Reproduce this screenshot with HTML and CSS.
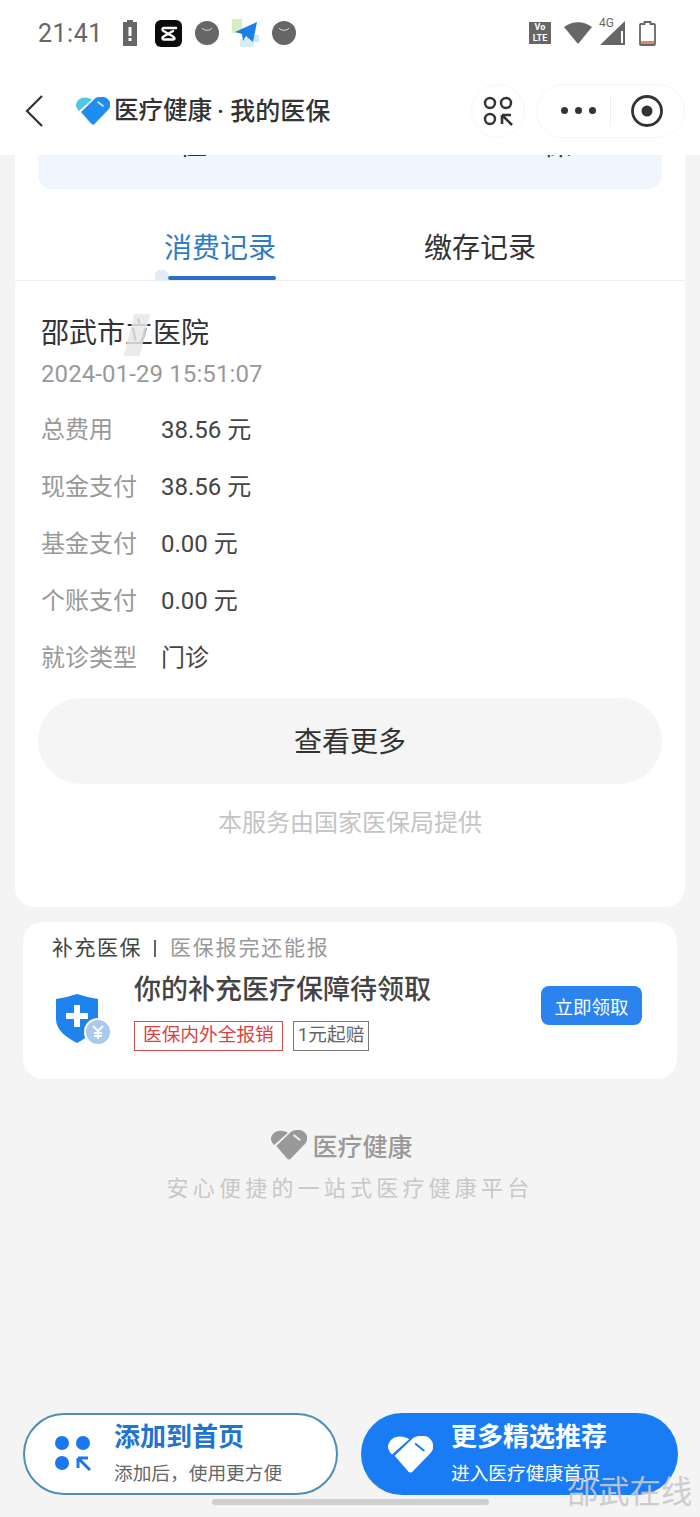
FILE: index.html
```html
<!DOCTYPE html>
<html lang="zh-CN">
    <head>
        <meta charset="utf-8" />
        <meta name="viewport" content="width=device-width, initial-scale=1" />
        <title>我的医保</title>
        <link rel="stylesheet" href="styles.css">
    </head>
    <body>
        <header class="top">
            <div class="status">
                <span class="clock">21:41</span>
                <div class="status-left">
                    <svg class="ic-alert" viewBox="0 0 14 26"><path d="M4 0h6v2h4v24H0V2h4z" fill="#666"/><path d="M5.500 7h3v9h-3zM5.500 18h3v3h-3z" fill="#fff"/></svg>
                    <svg class="ic-cut" viewBox="0 0 27 27"><rect width="27" height="27" rx="6" fill="#0b0b0b"/><path d="M21 8H9C7 8 7 10 8.500 11L18 16.500C20 18 20 19.500 18 19.500H9C7 19.500 7 17.500 8.500 16.500L18 11" stroke="#fff" stroke-width="2.400" fill="none" stroke-linecap="round" stroke-linejoin="round"/></svg>
                    <svg class="ic-round" viewBox="0 0 24 24"><circle cx="12" cy="12" r="12" fill="#666"/><path d="M7 7c2 3 8 3 10 0" stroke="#ddd" stroke-width="1" fill="none"/></svg>
                    <svg class="ic-plane" viewBox="0 0 27 28"><rect width="10" height="14" fill="#d5efc4"/><rect x="15" y="16" width="12" height="7" fill="#c8e6f5"/><rect x="8" y="20" width="14" height="8" fill="#d8ecf5"/><path d="M3 13L25 3l-4 20-7-6-3 5-1-7z" fill="#1a7fe6"/></svg>
                    <svg class="ic-round" viewBox="0 0 24 24"><circle cx="12" cy="12" r="12" fill="#666"/><path d="M7 7c2 3 8 3 10 0" stroke="#ddd" stroke-width="1" fill="none"/></svg>
                </div>
                <div class="status-right">
                    <span class="volte">Vo<br>LTE</span>
                    <svg class="ic-wifi" viewBox="0 0 28 22"><path d="M0 5c8-6.500 20-6.500 28 0L14 22z" fill="#666"/></svg>
                    <div class="signal">
                        <span class="signal-tag">4G</span>
                        <svg class="ic-signal" viewBox="0 0 25 24"><path d="M25 0v24H0z" fill="#666"/><path d="M21 10h2v12h-2z" fill="#fff"/></svg>
                    </div>
                    <svg class="ic-batt" viewBox="0 0 17 25"><path d="M5.500 1h6v2h3.500a1 1 0 0 1 1 1v19a1 1 0 0 1-1 1H2a1 1 0 0 1-1-1V4a1 1 0 0 1 1-1h3.500z" fill="#fff" stroke="#666" stroke-width="1.800"/><path d="M2 20h13v3H2z" fill="#e0876c"/></svg>
                </div>
            </div>
            <nav class="bar">
                <svg class="back" viewBox="0 0 20 34"><path d="M18 2L3 17l15 15" fill="none" stroke="#333" stroke-width="2.200"/></svg>
                <svg class="heart" viewBox="0 0 34 28">
                    <path d="M1 5C3 0 11-1 16 2.500L3 14C0 11-1 8 1 5z" fill="#4cc9e6"/>
                    <path d="M5 15L19 1.500C23-1 30-1 32.500 3 35 6 35 10 32 13L19 26.500C18 28 16 28 15 26.500z" fill="#1f8cf0"/>
                    <path d="M22 5l5 4" stroke="#bfe0fb" stroke-width="2" stroke-linecap="round"/>
                </svg>
                <span class="brand">医疗健康</span>
                <span class="brand-sub">· 我的医保</span>
                <div class="nav-tools">
                    <button class="nav-round">
                        <svg class="ic-add" viewBox="0 0 30 30"><circle cx="7" cy="7" r="5" fill="none" stroke="#333" stroke-width="2.400"/><circle cx="23" cy="7" r="5" fill="none" stroke="#333" stroke-width="2.400"/><circle cx="7" cy="23" r="5" fill="none" stroke="#333" stroke-width="2.400"/><path d="M19 19h9M19 19v9M19 19l10 10" fill="none" stroke="#333" stroke-width="2.600"/></svg>
                    </button>
                    <div class="capsule">
                        <div class="dots"><i></i><i></i><i></i></div>
                        <span class="capsule-line"></span>
                        <svg class="ic-target" viewBox="0 0 32 32"><circle cx="16" cy="16" r="14.500" fill="none" stroke="#333" stroke-width="2.800"/><circle cx="16" cy="16" r="5.500" fill="#333"/></svg>
                    </div>
                </div>
            </nav>
        </header>

        <main class="card">
            <div class="summary"><span>住</span><span>保</span></div>
            <div class="tabs">
                <div class="tab tab-on"><span class="tab-mark"></span>消费记录</div>
                <div class="tab">缴存记录</div>
            </div>
            <section class="record">
                <h2 class="hosp">邵武市<span class="smudged">立</span>医院</h2>
                <p class="date">2024-01-29 15:51:07</p>
                <dl class="rows">
                    <div class="row"><dt>总费用</dt><dd>38.56 元</dd></div>
                    <div class="row"><dt>现金支付</dt><dd>38.56 元</dd></div>
                    <div class="row"><dt>基金支付</dt><dd>0.00 元</dd></div>
                    <div class="row"><dt>个账支付</dt><dd>0.00 元</dd></div>
                    <div class="row"><dt>就诊类型</dt><dd>门诊</dd></div>
                </dl>
                <button class="more">查看更多</button>
                <p class="provider">本服务由国家医保局提供</p>
            </section>
        </main>

        <section class="promo">
            <div class="promo-head"><b>补充医保</b><span class="promo-sep"></span><span class="promo-note">医保报完还能报</span></div>
            <div class="promo-body">
                <svg class="shield" viewBox="0 0 56 52">
                    <path d="M1 6c8-1 14-3 21-5 7 2 14 4 21 5v20c0 11-10 18-21 24C11 44 1 37 1 26z" fill="#1f83ee"/>
                    <path d="M19 12h6v8h8v6h-8v8h-6v-8h-8v-6h8z" fill="#fff"/>
                    <circle cx="43" cy="39" r="14" fill="#fff"/>
                    <circle cx="43" cy="39" r="12" fill="#a9c9ef"/>
                    <path d="M38 33l5 5 5-5M43 38v8M39 40h8M39 43h8" stroke="#fff" stroke-width="2" fill="none"/>
                </svg>
                <div class="promo-text">
                    <h3>你的补充医疗保障待领取</h3>
                    <div class="tags"><span class="tag tag-red">医保内外全报销</span><span class="tag">1元起赔</span></div>
                </div>
                <button class="claim">立即领取</button>
            </div>
        </section>

        <section class="foot">
            <div class="foot-logo">
                <svg class="foot-heart" viewBox="0 0 34 28">
                    <path d="M1 5C3 0 11-1 16 2.500L3 14C0 11-1 8 1 5z" fill="#999"/>
                    <path d="M5 15L19 1.500C23-1 30-1 32.500 3 35 6 35 10 32 13L19 26.500C18 28 16 28 15 26.500z" fill="#999"/>
                    <path d="M22 5l5 4" stroke="#eee" stroke-width="2" stroke-linecap="round"/>
                </svg>
                <span>医疗健康</span>
            </div>
            <p class="slogan">安心便捷的一站式医疗健康平台</p>
        </section>

        <div class="actions">
            <div class="action action-add">
                <svg class="action-ic" viewBox="0 0 36 36"><circle cx="7" cy="7" r="7" fill="#1a78ee"/><circle cx="28" cy="7" r="7" fill="#1a78ee"/><circle cx="7" cy="27" r="7" fill="#1a78ee"/><path d="M23 22h10M23 22v10M23 22l12 12" fill="none" stroke="#1a78ee" stroke-width="3"/></svg>
                <div class="action-text"><strong>添加到首页</strong><small>添加后，使用更方便</small></div>
            </div>
            <div class="action action-go">
                <svg class="action-heart" viewBox="0 0 34 28">
                    <path d="M1 5C3 0 11-1 16 2.500L3 14C0 11-1 8 1 5z" fill="#fff"/>
                    <path d="M5 15L19 1.500C23-1 30-1 32.500 3 35 6 35 10 32 13L19 26.500C18 28 16 28 15 26.500z" fill="#fff"/>
                    <path d="M21 6l6 5" stroke="#1a7cf5" stroke-width="1.500" stroke-linecap="round"/>
                </svg>
                <div class="action-text"><strong>更多精选推荐</strong><small>进入医疗健康首页</small></div>
            </div>
        </div>

        <span class="home-bar"></span>
        <span class="mark">邵武在线</span>
    </body>
</html>
```
FILE: styles.css
```css
*{ margin:0; padding:0; box-sizing:border-box; }
html, body{ height:1517px; }
body{ position:relative;
    display:flex;
    flex-direction:column;
    overflow:hidden;
    font-family:Roboto, "Noto Sans CJK SC", sans-serif;
    background-color:#f4f4f4;
    color:#333; }
button{ border:0; font-family:inherit; }

/* barra de arriba */
.top{ background:#fff; height:155px; }
.status{ display:flex; align-items:center; height:66px; padding:0 44px 0 38px; }
.clock{ font-size:25px; color:#666; letter-spacing:.5px; width:85px; }
.status-left{ display:flex; align-items:center; }
.status-right{ display:flex; align-items:center; margin-left:auto; }
.ic-alert{ width:14px; height:26px; margin-right:18px; }
.ic-cut{ width:27px; height:27px; margin-right:13px; }
.ic-round{ width:24px; height:24px; }
.ic-plane{ width:27px; height:28px; margin:0 13px; }
.volte{ width:22px; height:22px; background:#666; color:#fff; font-size:9px; font-weight:700; line-height:10.500px; text-align:center; }
.ic-wifi{ width:28px; height:22px; margin-left:13px; }
.signal{ position:relative; width:25px; height:24px; margin-left:8px; }
.ic-signal{ width:25px; height:24px; }
.signal-tag{ position:absolute; left:-1px; top:-5px; font-size:12px; color:#666; }
.ic-batt{ width:17px; height:25px; margin-left:14px; }

.bar{ display:flex; align-items:center; height:89px; padding:0 15px 0 24px; }
.back{ width:20px; height:34px; margin-right:32px; }
.heart{ width:34px; height:28px; margin-right:4px; }
.brand{ font-size:24.500px; font-weight:500; color:#333; margin-bottom:4px; }
.brand-sub{ font-size:25px; font-weight:500; margin-left:5px; margin-bottom:4px; white-space:nowrap; }
.nav-tools{ display:flex; align-items:center; gap:11px; margin-left:auto; }
.nav-round{ display:flex; align-items:center; justify-content:center; width:54px; height:54px; border-radius:50%; background:#fff; border:1px solid #f6f6f6; }
.ic-add{ width:30px; height:30px; }
.capsule{ display:flex; align-items:center; width:149px; height:54px; border-radius:27px; border:1px solid #f6f6f6; background:#fff; padding-left:24px; }
.dots{ display:flex; gap:7px; width:49px; }
.dots i{ display:block; width:7px; height:7px; border-radius:50%; background:#333; }
.capsule-line{ width:1px; height:30px; background:#eee; }
.ic-target{ width:32px; height:32px; margin-left:20px; }

/* tarjeta principal */
.card{ margin:0 15px; height:752px; background:#fff; border-radius:0 0 20px 20px; }
.summary{ display:flex; justify-content:space-between; height:34px; margin:0 23px; padding:0 91px 0 141px; overflow:hidden; background:#f0f6fd; border-radius:0 0 14px 14px; }
.summary span{ font-size:28px; line-height:28px; margin-top:-23px; }
.tabs{ display:flex; justify-content:center; height:92px; border-bottom:1px solid #eeeeee; }
.tab{ position:relative; display:flex; justify-content:center; width:260px; padding-top:41px; font-size:28px; line-height:38px; color:#333; }
.tab-on{ color:#2f7cc4; }
.tab-on::after{ content:""; position:absolute; left:78px; width:108px; bottom:0; height:4px; border-radius:2px; background:#2a6fc8; }
.tab-mark{ position:absolute; left:65px; bottom:-1px; width:13px; height:11px; border-radius:5px 5px 0 0; background:#e3ebf6; }

.record{ padding:33px 23px 0; }
.hosp{ font-size:28px; font-weight:400; line-height:40px; padding-left:3px; }
.smudged{ position:relative; }
.smudged::after{ content:""; position:absolute; left:4px; top:-3px; width:16px; height:42px; background:#e8e8e8; transform:skewX(-14deg); opacity:.85; }
.date{ font-size:24px; line-height:36px; color:#999; padding-left:3px; margin-top:2px; letter-spacing:.1px; }
.rows{ margin-top:7px; padding-left:3px; }
.row{ display:flex; align-items:center; height:57px; font-size:24px; }
.row dt{ width:120px; color:#999; }
.row dd{ color:#444; }
.more{ display:block; width:100%; height:86px; margin-top:14px; padding-bottom:2px; border-radius:43px; background:#f5f5f5; font-size:28px; color:#333; }
.provider{ margin-top:21px; font-size:24px; line-height:36px; color:#c4c4c4; text-align:center; }

/* 补充医保 */
.promo{ margin:15px 23px 0; height:157px; padding:12px 35px 0 29px; background:#fff; border-radius:20px; }
.promo-head{ display:flex; align-items:center; font-size:21px; line-height:28px; color:#999; letter-spacing:1.500px; }
.promo-head b{ font-weight:400; color:#444; }
.promo-note{ letter-spacing:1.800px; }
.promo-sep{ width:2px; height:17px; background:#666; margin:0 14px 0 12px; }
.promo-body{ display:flex; align-items:flex-start; margin-top:5px; }
.shield{ width:56px; height:52px; margin:26px 23px 0 3px; }
.promo-text{ margin-top:4px; }
.promo-text h3{ font-size:27px; font-weight:500; line-height:38px; color:#444; }
.tags{ display:flex; gap:10px; margin-top:12px; }
.tag{ height:30px; padding:0 4px; border:1px solid #777; font-size:18.700px; line-height:27px; color:#666; }
.tag-red{ padding:0 8px; border-color:#d24a4a; color:#d64545; }
.claim{ width:101px; height:39px; margin:19px 0 0 auto; border-radius:8px; background:#2b84ee; color:#fff; font-size:18.500px; }

/* pie */
.foot{ margin-top:49px; display:flex; flex-direction:column; align-items:center; }
.foot-logo{ display:flex; align-items:center; gap:5px; height:34px; margin-right:16px; font-size:25px; font-weight:500; color:#999; }
.foot-heart{ width:36px; height:30px; }
.slogan{ margin-top:10px; font-size:22px; line-height:34px; letter-spacing:4.200px; color:#c8c8c8; }

/* botones de abajo */
.actions{ display:flex; justify-content:space-between; margin:auto 22px 22px 23px; }
.action{ display:flex; align-items:center; height:82px; border-radius:41px; }
.action-text{ margin-top:-2px; }
.action strong{ display:block; font-size:26px; font-weight:700; line-height:36px; }
.action small{ display:block; font-size:18.700px; line-height:28px; margin-top:5px; }
.action-add{ width:315px; background:#fff; border:2px solid #4f8db3; }
.action-add strong{ color:#1f74cf; }
.action-add small{ color:#666; }
.action-ic{ width:36px; height:36px; margin:0 23px 0 30px; }
.action-go{ width:317px; background:#1a7cf5; color:#fff; }
.action-heart{ width:45px; height:37px; margin:0 18px 0 27px; }

.home-bar{ position:absolute; left:212px; top:1499px; width:277px; height:6px; border-radius:3px; background:#cfcfcf; }
.mark{ position:absolute; left:567px; top:1471px; font-size:31.300px; line-height:44px; color:#c9c9c9; opacity:.9; }
```
